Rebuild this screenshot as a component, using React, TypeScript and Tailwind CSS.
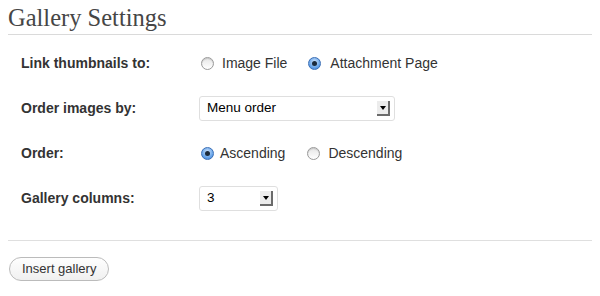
import React from "react";

const Radio = ({ checked }: { checked?: boolean }) =>
  checked ? (
    <span className="flex h-[13px] w-[13px] shrink-0 items-center justify-center rounded-full border border-[#3b6fb6] bg-[radial-gradient(circle_at_50%_35%,#cfe3fb,#6aa6ea_60%,#3d7fd6)]">
      <span className="h-[5px] w-[5px] rounded-full bg-[#1b2a3c]"></span>
    </span>
  ) : (
    <span className="block h-[13px] w-[13px] shrink-0 rounded-full border border-[#9a9a9a] bg-[linear-gradient(#e6e6e6,#ffffff)] shadow-[inset_0_1px_1px_rgba(0,0,0,0.15)]"></span>
  );

const Select = ({ value, width }: { value: string; width: string }) => (
  <div
    className={`flex h-[25px] ${width} items-center justify-between rounded-[3px] border border-[#dfdfdf] bg-white pl-[7px] pr-[4px]`}
  >
    <span className="text-[13.5px] text-black">{value}</span>
    <span className="flex h-[15px] w-[13px] items-center justify-center border-b-2 border-r-2 border-b-[#6b6b6b] border-r-[#6b6b6b] bg-[#ececec]">
      <span className="h-0 w-0 border-l-[3px] border-r-[3px] border-t-[4px] border-l-transparent border-r-transparent border-t-black"></span>
    </span>
  </div>
);

const rows = ["Link thumbnails to:", "Order images by:", "Order:", "Gallery columns:"];

const App = () => {
  return (
    <div className="h-[296px] w-[600px] bg-white px-2 font-['Liberation_Sans',Arial,sans-serif] text-[#333]">
      <div className="flex h-[35px] items-end border-b border-[#dadada] pb-[4px]">
        <h3 className="font-['Liberation_Serif',Georgia,serif] text-[24.5px] leading-none text-[#464646]">
          Gallery Settings
        </h3>
      </div>

      <div className="mt-[6px] flex flex-col">
        {rows.map((label, key) => (
          <div className="grid h-[45px] grid-cols-[191px_1fr] items-center" key={key}>
            <div className="pl-[13px] text-[14px] font-bold">{label}</div>
            <div className="flex items-center text-[14px]">
              {key === 0 && (
                <>
                  <span className="ml-[2px]"><Radio /></span>
                  <span className="ml-[8px]">Image File</span>
                  <span className="ml-[21px]"><Radio checked /></span>
                  <span className="ml-[9px]">Attachment Page</span>
                </>
              )}
              {key === 1 && <Select value="Menu order" width="w-[196px]" />}
              {key === 2 && (
                <>
                  <span className="ml-[2px]"><Radio checked /></span>
                  <span className="ml-[6px]">Ascending</span>
                  <span className="ml-[22px]"><Radio /></span>
                  <span className="ml-[8px]">Descending</span>
                </>
              )}
              {key === 3 && <Select value="3" width="w-[79px]" />}
            </div>
          </div>
        ))}
      </div>

      <div className="mt-[19px] border-t border-[#dfdfdf]"></div>

      <button className="ml-px mt-4 h-[24px] rounded-full border border-[#bbb] bg-[linear-gradient(#fefefe,#f0f0f0)] px-[12px] text-[13px] text-[#333]">
        Insert gallery
      </button>
    </div>
  );
};

export default App;
